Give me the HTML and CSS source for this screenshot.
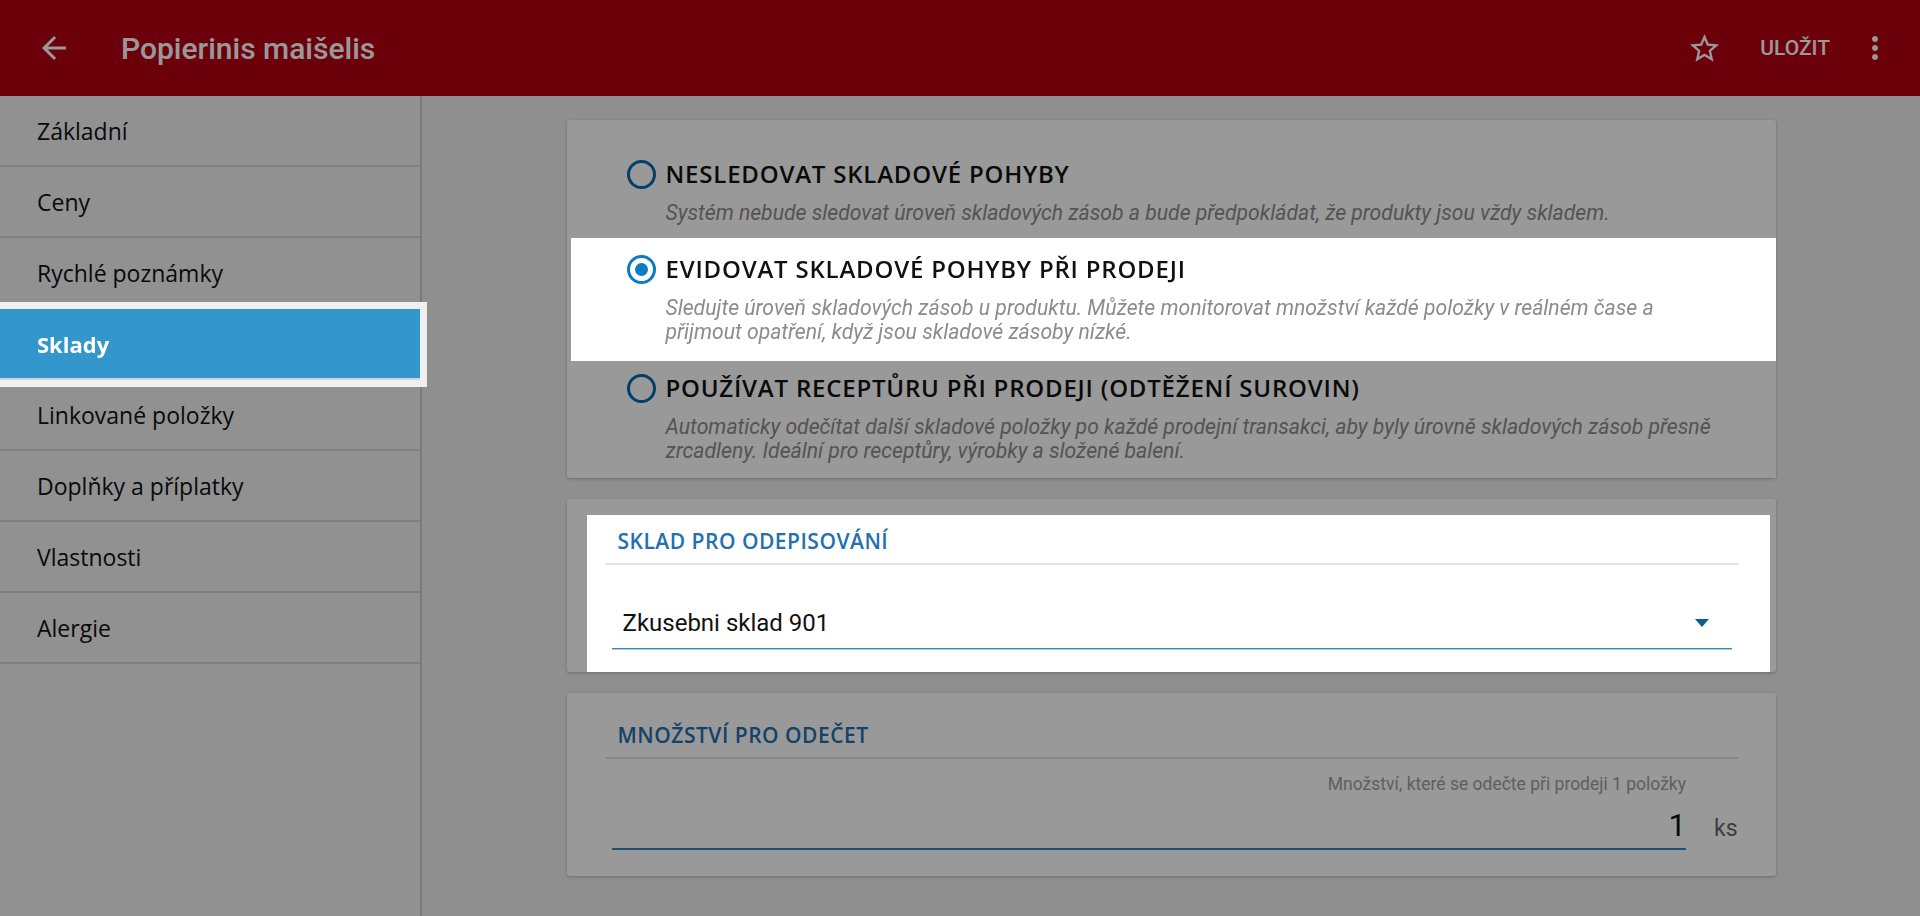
FILE: index.html
```html
<!DOCTYPE html>
<html lang="cs">
<head>
    <meta charset="UTF-8">
    <meta name="viewport" content="width=device-width, initial-scale=1.0">
    <title>Popierinis maišelis - Sklady</title>
    <link rel="stylesheet" href="styles.css">
</head>
<body>
    <header class="topbar">
        <button class="icon-btn back-btn" aria-label="Zpět">
            <svg viewBox="0 0 24 24"><path d="M20 11H7.830l5.59-5.59L12 4l-8 8 8 8 1.41-1.41L7.83 13H20v-2z"/></svg>
        </button>
        <h1 class="topbar-title">Popierinis maišelis</h1>
        <div class="topbar-actions">
            <button class="icon-btn star-btn" aria-label="Oblíbené">
                <svg viewBox="0 0 24 24"><path d="M22 9.24l-7.19-.62L12 2 9.19 8.63 2 9.24l5.46 4.73L5.82 21 12 17.27 18.18 21l-1.63-7.03L22 9.24zM12 15.4l-3.76 2.27 1-4.28-3.32-2.88 4.38-.38L12 6.1l1.71 4.04 4.38.38-3.32 2.88 1 4.28L12 15.4z"/></svg>
            </button>
            <button class="text-btn">ULOŽIT</button>
            <button class="icon-btn more-btn" aria-label="Další">
                <svg viewBox="0 0 24 24"><path d="M12 8c1.1 0 2-.9 2-2s-.9-2-2-2-2 .9-2 2 .9 2 2 2zm0 2c-1.1 0-2 .9-2 2s.9 2 2 2 2-.9 2-2-.9-2-2-2zm0 6c-1.1 0-2 .9-2 2s.9 2 2 2 2-.9 2-2-.9-2-2-2z"/></svg>
            </button>
        </div>
    </header>

    <div class="layout">
        <nav class="sidebar">
            <a class="nav-item">Základní</a>
            <a class="nav-item">Ceny</a>
            <a class="nav-item">Rychlé poznámky</a>
            <a class="nav-item active tour-spot">Sklady</a>
            <a class="nav-item">Linkované položky</a>
            <a class="nav-item">Doplňky a příplatky</a>
            <a class="nav-item">Vlastnosti</a>
            <a class="nav-item">Alergie</a>
        </nav>

        <main class="content">
            <section class="card stock-modes">
                <label class="option">
                    <span class="radio"></span>
                    <span class="option-title">NESLEDOVAT SKLADOVÉ POHYBY</span>
                    <span class="option-desc">Systém nebude sledovat úroveň skladových zásob a bude předpokládat, že produkty jsou vždy skladem.</span>
                </label>
                <label class="option tour-spot">
                    <span class="radio checked"></span>
                    <span class="option-title">EVIDOVAT SKLADOVÉ POHYBY PŘI PRODEJI</span>
                    <span class="option-desc">Sledujte úroveň skladových zásob u produktu. Můžete monitorovat množství každé položky v reálném čase a přijmout opatření, když jsou skladové zásoby nízké.</span>
                </label>
                <label class="option">
                    <span class="radio"></span>
                    <span class="option-title">POUŽÍVAT RECEPTŮRU PŘI PRODEJI (ODTĚŽENÍ SUROVIN)</span>
                    <span class="option-desc">Automaticky odečítat další skladové položky po každé prodejní transakci, aby byly úrovně skladových zásob přesně zrcadleny. Ideální pro receptůry, výrobky a složené balení.</span>
                </label>
            </section>

            <section class="card">
                <div class="card-body tour-spot">
                    <h2 class="section-title">SKLAD PRO ODEPISOVÁNÍ</h2>
                    <div class="select">
                        <span>Zkusebni sklad 901</span>
                        <span class="caret"></span>
                    </div>
                </div>
            </section>

            <section class="card">
                <div class="card-body">
                    <h2 class="section-title">MNOŽSTVÍ PRO ODEČET</h2>
                    <div class="qty-row">
                        <div class="qty-field">
                            <div class="qty-hint">Množství, které se odečte při prodeji 1 položky</div>
                            <div class="qty-value">1</div>
                        </div>
                        <span class="qty-unit">ks</span>
                    </div>
                </div>
            </section>
        </main>
    </div>

    <!-- průvodce: ztmavení stránky, zvýrazněné prvky jsou nad ním -->
    <div class="tour-backdrop"></div>
</body>
</html>
```

FILE: styles.css
```css
body {
    margin: 0;
    font-family: Roboto, "Liberation Sans", sans-serif;
    background-color: #eeeeee;
    color: #111;
    height: 916px;
    overflow: hidden;
}
button {
    font: inherit;
    background: none;
    border: none;
    padding: 0;
    color: inherit;
    cursor: pointer;
}

/* horní lišta */
.topbar {
    height: 96px;
    background-color: #b50012;
    color: #fff;
    display: flex;
    align-items: center;
    padding: 0 27px 0 36px;
}
.icon-btn {
    display: flex;
}
.icon-btn svg {
    width: 36px;
    height: 36px;
    fill: #fff;
}
.topbar-title {
    margin: 0 0 0 49px;
    font-size: 30px;
    font-weight: 500;
    flex: 1;
}
.topbar-actions {
    display: flex;
    align-items: center;
}
.star-btn svg {
    width: 35px;
    height: 35px;
}
.text-btn {
    font-size: 21px;
    font-weight: 500;
    margin: 0 27px 0 38px;
}

.layout {
    display: flex;
    height: 820px;
}

/* levé menu */
.sidebar {
    width: 420px;
    flex-shrink: 0;
    background-color: #f2f2f2;
    border-right: 2px solid #cccccc;
}
.nav-item {
    display: flex;
    align-items: center;
    height: 69px;
    padding-left: 37px;
    border-bottom: 2px solid #d4d4d4;
    font-family: "Open Sans", sans-serif;
    font-size: 23px;
    color: #111;
}
.nav-item.active {
    background-color: #3397cd;
    color: #fff;
    font-weight: 700;
    font-size: 22px;
    box-shadow: 0 0 0 7px #f0f0f0;
}

/* obsah */
.content {
    flex: 1;
    padding-top: 24px;
    overflow: hidden;
}
.card {
    box-sizing: border-box;
    max-width: 1209px;
    margin: 0 auto 21px;
    padding: 16px 6px 0 20px;
    background-color: #fff;
    border-radius: 3px;
    box-shadow: 0 1px 3px rgba(0, 0, 0, 0.25);
}
.card.stock-modes {
    padding: 25px 0 0;
}
.option {
    display: grid;
    grid-template-columns: 29px 1fr;
    column-gap: 10px;
    margin-left: 4px;
    padding: 13px 50px 15px 56px;
    background-color: #fff;
}
.option.tour-spot {
    box-shadow: 0 -2px 0 #fff, 0 2px 0 #fff;
}
.radio {
    grid-row: 1;
    align-self: center;
    box-sizing: border-box;
    width: 29px;
    height: 29px;
    border: 3px solid #006bb3;
    border-radius: 50%;
    display: flex;
    align-items: center;
    justify-content: center;
}
.radio.checked {
    border-color: #0a7bc4;
}
.radio.checked::after {
    content: "";
    width: 13px;
    height: 13px;
    border-radius: 50%;
    background-color: #0a7bc4;
}
.option-title {
    font-family: "Open Sans", sans-serif;
    font-weight: 600;
    font-size: 24px;
    letter-spacing: 0.8px;
    line-height: 32px;
    color: #111;
}
.option-desc {
    grid-column: 2;
    margin-top: 11px;
    font-style: italic;
    font-size: 21.2px;
    line-height: 24px;
    color: #8c8c8c;
}

.card-body {
    display: flow-root;
    padding-bottom: 26px;
}
.card-body.tour-spot {
    background-color: #fff;
    padding-bottom: 0;
}
.section-title {
    margin: 0 32px 0 19px;
    padding: 12px 0 8px 12px;
    border-bottom: 2px solid #e2e2e2;
    font-family: "Open Sans", sans-serif;
    font-weight: 600;
    font-size: 21px;
    letter-spacing: 0.5px;
    line-height: 28px;
    color: #2270b0;
}
.select {
    display: flex;
    align-items: center;
    justify-content: space-between;
    margin: 33px 38px 23px 25px;
    padding: 10px 23px 10px 11px;
    font-size: 24px;
    line-height: 30px;
    border-bottom: 1px solid #3c87c0;
    box-shadow: 0 1px 0 #a9cce8;
}
.caret {
    width: 0;
    height: 0;
    border-left: 7px solid transparent;
    border-right: 7px solid transparent;
    border-top: 8px solid #0a5e96;
}
.qty-row {
    display: flex;
    align-items: flex-end;
    margin: 14px 32px 0 25px;
}
.qty-field {
    flex: 1;
    text-align: right;
    border-bottom: 2px solid #3484c0;
    padding-bottom: 4px;
}
.qty-hint {
    font-size: 17.5px;
    line-height: 22px;
    color: #9e9e9e;
}
.qty-value {
    margin-top: 13px;
    font-size: 31px;
    line-height: 36px;
}
.qty-unit {
    margin: 0 0 6px 28px;
    font-size: 23px;
    line-height: 30px;
    color: #686868;
}

/* průvodce */
.tour-backdrop {
    position: fixed;
    inset: 0;
    background-color: rgba(0, 0, 0, 0.4);
    z-index: 10;
}
.tour-spot {
    position: relative;
    z-index: 11;
}
```
